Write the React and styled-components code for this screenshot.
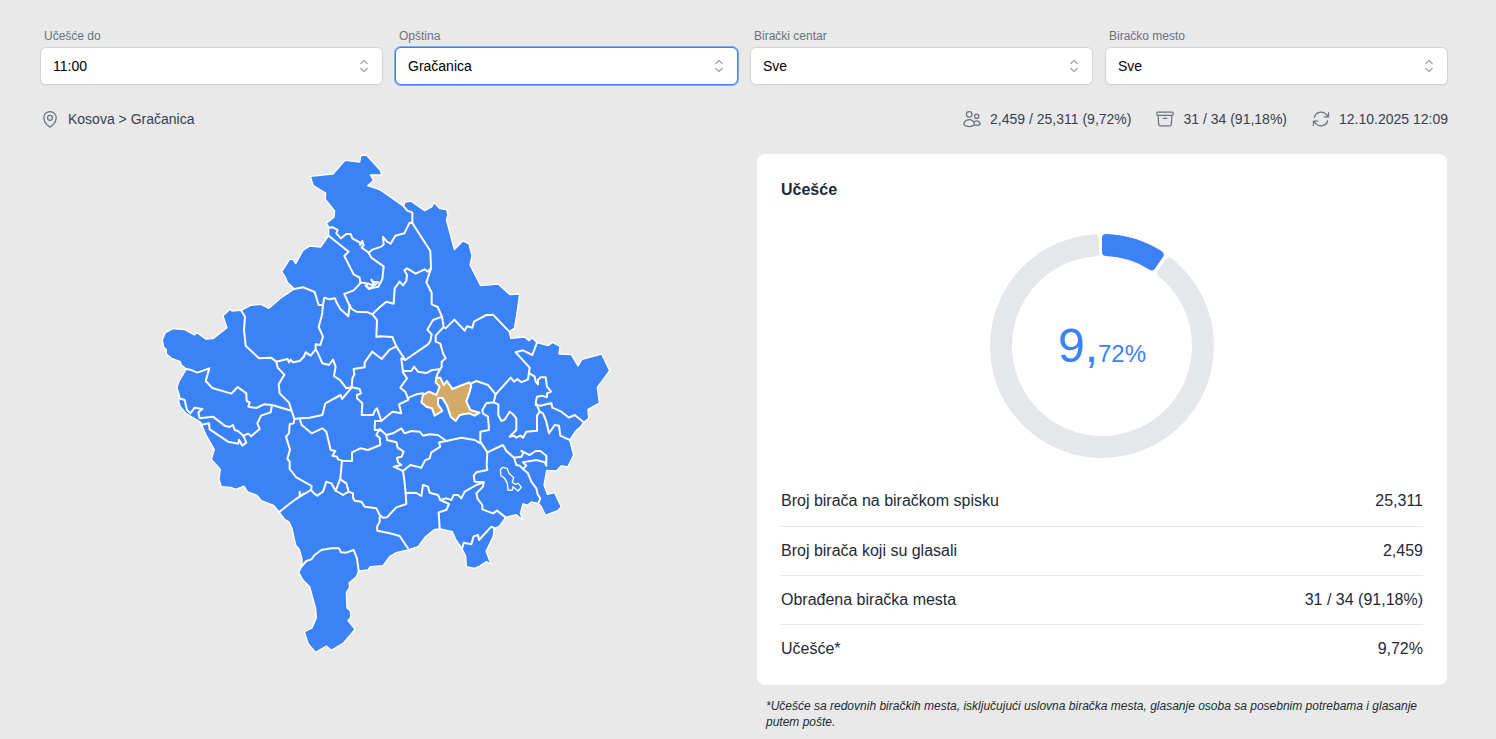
import React from 'react'
import styled, { createGlobalStyle, css } from 'styled-components'
import {
  HiChevronUpDown,
  HiOutlineArchiveBox,
  HiOutlineArrowPath,
  HiOutlineMapPin,
  HiOutlineUsers
} from 'react-icons/hi2'

const GlobalStyle = createGlobalStyle`
  * {
    box-sizing: border-box;
  }
  body {
    margin: 0;
    background: #e9e9e9;
    color: #1f2937;
    font-family: 'Liberation Sans', Arial, sans-serif;
    font-size: 16px;
    line-height: 24px;
  }
`

const Page = styled.main`
  padding: 28px 48px 8px 40px;
`

const Filters = styled.form`
  display: grid;
  grid-template-columns: repeat(4, 1fr);
  gap: 12px;
`

const FilterLabel = styled.label`
  display: block;
  padding-left: 4px;
  margin-bottom: 3px;
  font-size: 12px;
  line-height: 16px;
  color: #6b7280;
`

const SelectWrap = styled.div`
  position: relative;
  svg {
    position: absolute;
    top: 9px;
    right: 9px;
    width: 20px;
    height: 20px;
    color: #9ca3af;
    pointer-events: none;
  }
`

const Select = styled.select`
  display: block;
  width: 100%;
  height: 38px;
  padding: 0 36px 0 12px;
  appearance: none;
  border: 1px solid #d1d5db;
  border-radius: 6px;
  background: #fff;
  box-shadow: 0 1px 2px rgba(0, 0, 0, 0.05);
  color: #000;
  font-family: inherit;
  font-size: 14px;
  line-height: 20px;
  outline: none;
  ${({ $active }) =>
    $active &&
    css`
      border-color: #3b82f6;
      box-shadow: 0 0 0 1px rgba(59, 130, 246, 0.6);
    `}
`

const InfoBar = styled.div`
  display: flex;
  align-items: center;
  justify-content: space-between;
  margin-top: 24px;
`

const InfoGroup = styled.div`
  display: flex;
  gap: 24px;
`

const InfoItem = styled.div`
  display: flex;
  align-items: center;
  gap: 8px;
  font-size: 14px;
  line-height: 20px;
  color: #374151;
  svg {
    width: 20px;
    height: 20px;
    color: #6b7280;
  }
`

const Content = styled.div`
  display: grid;
  grid-template-columns: 1fr 1fr;
  gap: 24px;
  margin-top: 16px;
`

const MapBox = styled.div`
  display: flex;
  justify-content: center;
  align-items: flex-start;
  svg {
    width: 100%;
    max-width: 470px;
    height: auto;
  }
`

const Side = styled.section`
  padding: 9px 1px 0;
`

const Card = styled.div`
  padding: 24px 24px 12px;
  border-radius: 8px;
  background: #fff;
`

const CardTitle = styled.h2`
  margin: 0;
  font-size: 16px;
  line-height: 24px;
  font-weight: 700;
`

const ChartBox = styled.div`
  display: grid;
  place-items: center;
  margin: 32px 0 19px;
  > * {
    grid-area: 1 / 1;
  }
`

const Share = styled.div`
  padding-top: 8px;
  font-size: 48px;
  line-height: 48px;
  color: #3b82f6;
  span {
    font-size: 24px;
  }
`

const Stats = styled.table`
  width: 100%;
  border-collapse: collapse;
  th,
  td {
    height: 49px;
    padding: 0;
    font-weight: 400;
  }
  th {
    text-align: left;
  }
  td {
    text-align: right;
  }
  tr + tr {
    border-top: 1px solid #e5e7eb;
  }
`

const Note = styled.p`
  margin: 0;
  padding: 13px 8px 8px 9px;
  font-size: 12px;
  line-height: 16px;
  font-style: italic;
`

const filters = [
  { id: 'time', label: 'Učešće do', value: '11:00' },
  { id: 'municipality', label: 'Opština', value: 'Gračanica', active: true },
  { id: 'center', label: 'Birački centar', value: 'Sve' },
  { id: 'station', label: 'Biračko mesto', value: 'Sve' }
]

const stats = [
  ['Broj birača na biračkom spisku', '25,311'],
  ['Broj birača koji su glasali', '2,459'],
  ['Obrađena biračka mesta', '31 / 34 (91,18%)'],
  ['Učešće*', '9,72%']
]

const country =
  '482,94 550,87 586,46 630,51 634,31 650,30 692,76 696,90 662,90 672,106 654,122 690,134 720,154 762,184 765,172 783,168 825,197 847,185 853,172 870,191 891,194 895,210 890,224 914,314 939,288 958,297 967,332 961,360 993,422 1045,417 1081,449 1110,447 1101,510 1094,550 1079,560 1083,580 1125,576 1138,587 1147,578 1162,593 1195,602 1209,592 1231,604 1228,627 1265,629 1285,663 1297,643 1356,627 1380,677 1343,727 1349,774 1315,793 1317,820 1300,834 1293,845 1280,856 1260,885 1272,930 1254,966 1235,962 1220,978 1191,976 1183,1020 1193,1048 1215,1043 1221,1057 1235,1085 1224,1097 1187,1111 1175,1085 1166,1075 1145,1071 1133,1081 1120,1076 1112,1105 1119,1125 1100,1109 1068,1117 1050,1143 1033,1151 1031,1173 1021,1195 1009,1219 1024,1257 1010,1250 990,1263 975,1270 950,1265 948,1233 935,1208 919,1185 908,1160 872,1152 855,1153 826,1177 805,1205 775,1215 740,1223 720,1235 700,1262 662,1265 655,1275 627,1278 620,1295 598,1314 600,1327 590,1343 592,1389 602,1397 603,1417 595,1427 616,1453 580,1495 545,1516 530,1503 498,1522 476,1497 464,1461 487,1449 500,1419 498,1390 480,1325 460,1305 447,1282 457,1263 457,1242 449,1213 438,1200 427,1150 418,1131 405,1123 388,1101 372,1081 335,1067 322,1051 294,1041 283,1023 258,1033 243,1027 215,1025 208,1002 212,973 185,943 194,914 168,868 153,832 110,806 92,785 87,770 90,755 82,728 87,711 110,672 95,660 92,650 66,640 50,627 50,614 42,606 38,585 47,563 70,551 105,554 134,570 142,563 168,582 190,581 232,548 220,512 242,492 246,498 274,496 303,481 334,478 358,490 396,457 434,432 412,410 408,398 396,380 420,343 430,343 438,356 460,316 480,303 513,306 537,272 537,245 530,235 553,217 555,198 527,163 528,144 491,122'

const borders = [
  '537,248 550,247 564,255 560,265 574,280 590,267 603,267 608,280 630,292 632,300 638,288 642,300 636,308 657,323 668,314 695,305 702,298 700,276 712,290 723,296 737,272 764,265 780,233 788,234 788,203 773,197 762,184',
  '788,234 842,318 844,370 830,412 846,443 846,478 864,486 877,515 882,546 888,550 914,524 945,557 952,544 968,548 973,530 1010,510 1030,509 1079,560',
  '882,546 858,572 858,590 872,596 880,625 888,640 876,650 876,665 863,688 860,698',
  '877,515 850,525 833,554 846,568 842,588 835,598 767,645 740,604 728,576 690,574 680,576 682,525 668,508',
  '537,272 597,320 584,333 612,388 630,398 632,415 612,436 584,447 598,478 606,492 620,500 655,502 668,508 690,487 710,470 732,476 735,430 750,410 760,421 770,408 772,390 764,376 772,370 798,386 825,373 834,380 842,372',
  '657,323 665,338 702,364 698,402 686,425 670,428 658,432 648,422 656,416 632,412',
  '656,416 672,422 686,412 670,410 665,404 672,418 662,430 650,424',
  '434,432 461,427 495,441 507,480 520,480 524,458 540,463 556,460 562,475 572,492 596,514 600,480',
  '520,480 517,510 507,546 520,575 512,600 498,598 498,613 483,632 468,622 462,636 450,648 430,652 423,644 418,652 414,642 380,650 364,638 328,640 305,618 288,602 283,555 286,515 274,496',
  '498,613 505,625 518,655 538,660 550,644 558,665 553,693 572,706 590,730 606,727 608,700 614,688 612,672 645,667 645,652 668,620 696,642 720,614 740,604',
  '380,650 384,668 404,689 387,718 390,745 418,773 425,795 434,822 450,820 480,818 490,816 518,810 527,775 573,750 577,762 604,730',
  '110,672 122,674 143,683 179,670 168,708 188,729 245,746 264,726 290,745 291,768 300,772 296,785 320,789 343,778 367,780 425,797',
  '367,780 363,802 334,812 323,835 330,852 304,874 296,866 281,872 265,858 255,855 250,840 240,846 225,842 190,815 150,820 146,802 158,792 135,788 122,805 112,795 105,765 90,760',
  '153,840 178,835 180,853 235,890 266,896 268,884 278,902 290,893 281,872',
  '434,822 432,835 420,838 418,865 409,875 421,914 413,942 420,950 420,972 440,997 486,1023 484,1035 450,1055 435,1065 415,1080 388,1102',
  '450,1040 450,1055 462,1046',
  '484,1035 494,1046 503,1052 520,1040 530,1010 545,1015 558,1038 572,1000 577,947',
  '572,1003 590,1015 597,1040 580,1050 560,1038',
  '597,1040 610,1045 610,1058 615,1067 635,1070 645,1085 680,1090 690,1110 700,1118 712,1117 740,1087 770,1077 768,1045',
  '450,820 456,840 486,865 518,850 530,860 543,915 557,918 548,932 562,935 565,943 577,947 607,948 607,922 632,910 655,915 692,900 690,878 680,870 685,860 693,855 675,855 676,828 695,828 682,790 676,796 670,810 636,810 638,775 622,760 622,750 634,745 630,732 606,727',
  '695,828 728,800 755,805 748,778 775,765 778,757 800,748 820,745 828,750',
  '775,762 768,742 752,728 772,700 760,682 755,640 767,645',
  '760,678 785,678 793,665 805,680 830,684 848,675 870,673',
  '965,715 980,708 1015,720 1038,748 1032,772 1010,775 998,795 1000,806 1015,815 1018,855 992,860 992,890 1013,922 1011,960 1013,975 980,982 972,992 975,1010 1002,1012 1000,1025 980,1045 984,1062 998,1080 998,1093 1030,1105 1042,1097 1068,1117',
  '1038,748 1083,698 1093,710 1103,702 1115,712 1135,703 1140,668 1098,622 1120,616 1148,630 1162,593',
  '1140,685 1155,695 1158,710 1165,718 1165,704 1173,697 1188,697 1192,725 1204,740 1192,745 1192,757 1178,752 1162,755 1158,772 1170,800 1162,812 1162,857 1130,860 1120,878 1112,872 1100,878 1092,872 1080,875 1100,855 1100,820 1090,808 1080,800 1065,824 1055,828 1046,810 1046,778 1032,772',
  '1158,780 1172,782 1205,774 1208,788 1235,800 1258,818 1275,810 1302,832',
  '1170,800 1180,805 1190,830 1198,865 1215,840 1228,842 1232,872 1260,885',
  '1013,922 1060,900 1070,918 1093,938 1115,935 1122,922 1115,918 1140,930 1158,918 1172,918 1190,932 1190,962 1185,952 1160,945 1120,952 1130,962 1120,972 1110,962 1100,960 1093,938',
  '1120,972 1135,985 1145,1010 1160,1030 1164,1048 1172,1060 1166,1075',
  '690,852 710,870 730,865 755,850 765,865 785,858 810,860 820,872 840,868 865,870 890,888 935,878 975,885 992,895',
  '710,870 712,885 740,892 744,908 762,920 756,935 742,938 745,952 755,960 732,965 760,978 782,960 815,968 826,946 840,940 845,922 872,905 868,892 890,888',
  '760,978 764,1005 768,1045 780,1043 800,1044 815,1053 820,1020 835,1025 840,1043 865,1050 872,1065 890,1060 905,1065 912,1050 925,1050 935,1060 945,1040 980,1020 1002,1012',
  '872,1065 898,1077 890,1095 867,1102 870,1152',
  '938,1208 942,1193 965,1198 972,1174 985,1170 988,1185 1025,1145 1036,1151',
  '690,1117 690,1130 682,1145 683,1157 720,1165 750,1173 775,1210',
  '457,1263 470,1248 485,1243 495,1230 515,1215 545,1210 568,1210 574,1222 590,1223 612,1215 622,1240 627,1278'
]

const gracanica =
  '860,698 872,698 882,720 892,708 908,732 958,712 965,722 960,740 950,770 962,795 990,803 975,812 958,805 930,810 918,828 903,815 892,782 878,758 865,760 865,778 878,798 855,812 847,790 830,785 815,772 820,750 838,740 860,750 870,725 858,712'

const enclave =
  '1052,975 1058,967 1072,970 1078,985 1092,998 1088,1012 1098,1018 1106,1015 1115,1027 1105,1038 1090,1025 1088,1036 1075,1035 1073,1015 1065,1000 1054,992'

const KosovoMap = () => (
  <svg viewBox="4 0 1410 1560" role="img" aria-label="Kosova">
    <g strokeLinejoin="round" strokeLinecap="round" stroke="#fff" fill="none">
      <polygon points={country} fill="#3b82f6" strokeWidth="4" />
      {borders.map(points => (
        <polyline key={points} points={points} strokeWidth="6" />
      ))}
      <polygon points={enclave} strokeWidth="4" />
      <polygon points={gracanica} fill="#d4aa66" strokeWidth="6" />
    </g>
  </svg>
)

const CORNER = 4
const OUTER = 112
const INNER = 90

// ring segment pulled in by CORNER on every side, the round stroke fills it back
const segment = (from, to) => {
  const point = (r, deg, side) => {
    const a = (deg * Math.PI) / 180 + side * Math.asin(CORNER / r)
    return `${r * Math.sin(a)} ${-r * Math.cos(a)}`
  }
  const big = to - from > 180 ? 1 : 0
  const out = OUTER - CORNER
  const inn = INNER + CORNER
  return `M${point(out, from, 1)} A${out} ${out} 0 ${big} 1 ${point(out, to, -1)}
    L${point(inn, to, -1)} A${inn} ${inn} 0 ${big} 0 ${point(inn, from, 1)} Z`
}

const Donut = () => (
  <svg width="224" height="224" viewBox="-112 -112 224 224" aria-hidden="true">
    <g strokeWidth={CORNER * 2} strokeLinejoin="round">
      <path d={segment(36.4, 358.3)} fill="#e5e7eb" stroke="#e5e7eb" />
      <path d={segment(0, 34.4)} fill="#3b82f6" stroke="#3b82f6" />
    </g>
  </svg>
)

const Filter = ({ id, label, value, active }) => (
  <div>
    <FilterLabel htmlFor={id}>{label}</FilterLabel>
    <SelectWrap>
      <Select id={id} $active={active}>
        <option>{value}</option>
      </Select>
      <HiChevronUpDown />
    </SelectWrap>
  </div>
)

export default () => (
  <Page>
    <GlobalStyle />
    <Filters>
      {filters.map(filter => (
        <Filter key={filter.id} {...filter} />
      ))}
    </Filters>

    <InfoBar>
      <InfoItem>
        <HiOutlineMapPin />
        <span>Kosova &gt; Gračanica</span>
      </InfoItem>
      <InfoGroup>
        <InfoItem>
          <HiOutlineUsers />
          <span>2,459 / 25,311 (9,72%)</span>
        </InfoItem>
        <InfoItem>
          <HiOutlineArchiveBox />
          <span>31 / 34 (91,18%)</span>
        </InfoItem>
        <InfoItem>
          <HiOutlineArrowPath />
          <span>12.10.2025 12:09</span>
        </InfoItem>
      </InfoGroup>
    </InfoBar>

    <Content>
      <MapBox>
        <KosovoMap />
      </MapBox>
      <Side>
        <Card>
          <CardTitle>Učešće</CardTitle>
          <ChartBox>
            <Donut />
            <Share>
              9,<span>72%</span>
            </Share>
          </ChartBox>
          <Stats>
            <tbody>
              {stats.map(([name, value]) => (
                <tr key={name}>
                  <th scope="row">{name}</th>
                  <td>{value}</td>
                </tr>
              ))}
            </tbody>
          </Stats>
        </Card>
        <Note>
          *Učešće sa redovnih biračkih mesta, isključujući uslovna biračka mesta, glasanje osoba sa
          posebnim potrebama i glasanje putem pošte.
        </Note>
      </Side>
    </Content>
  </Page>
)
